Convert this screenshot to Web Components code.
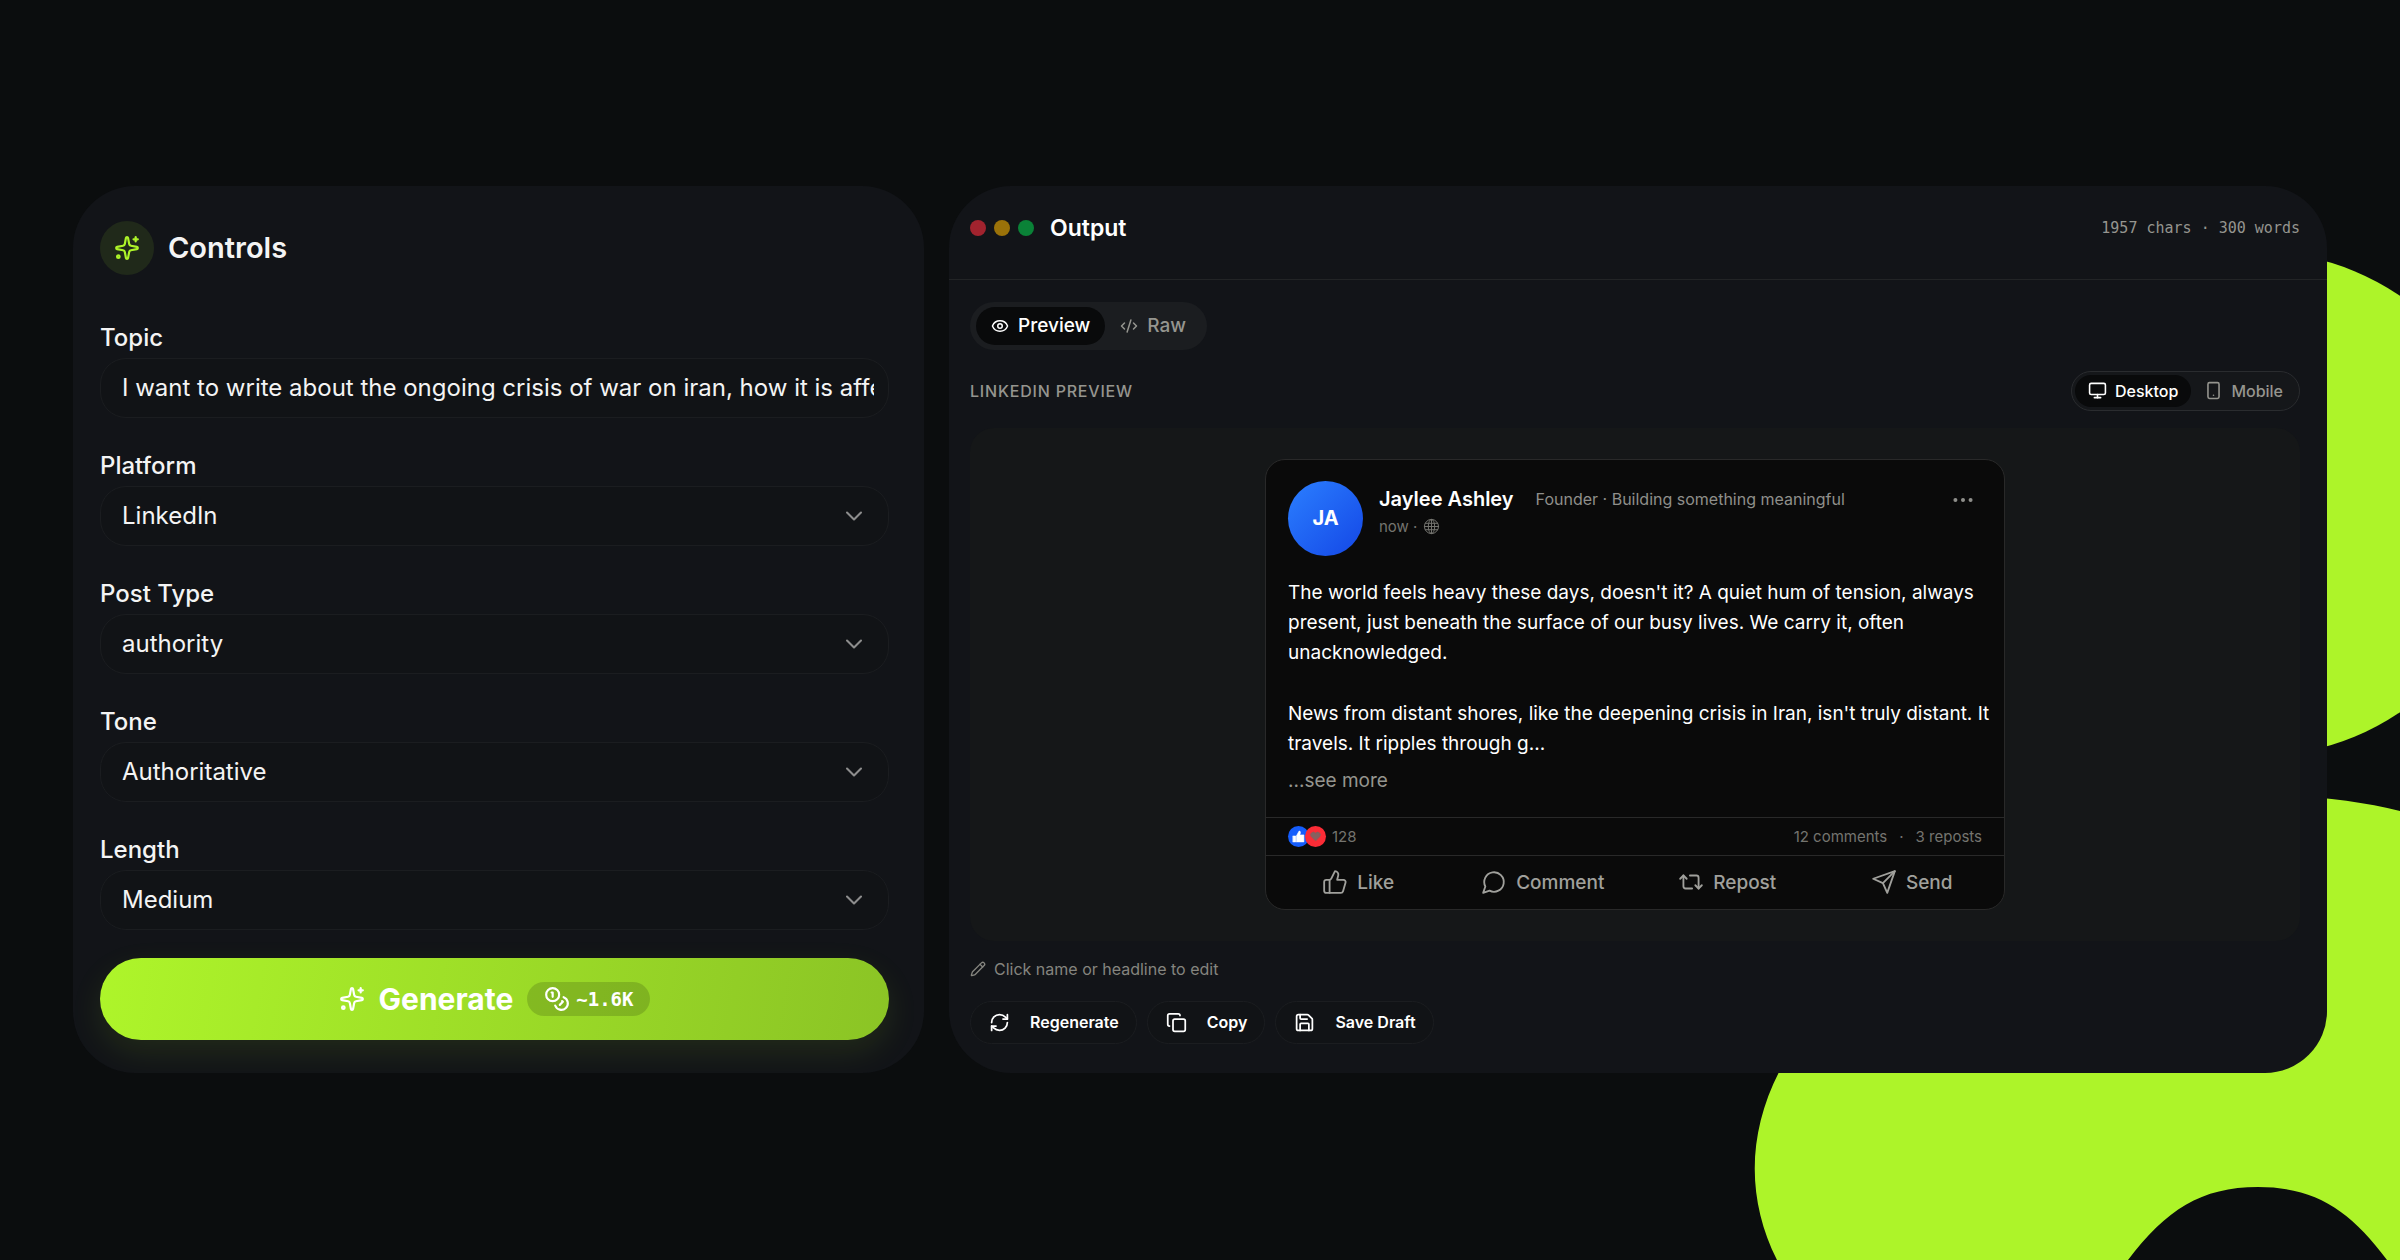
<!DOCTYPE html>
<html lang="en">
<head>
<meta charset="utf-8">
<title>Post generator</title>
<style>
  :root {
    --page: #0b0d0e;
    --panel: #121418;
    --field: #111316;
    --line: #1b1d20;
    --lime: #adf429;
    --text: #f4f4f4;
    --muted: #95958f;
    --dim: #74746f;
  }
  body {
    margin: 0;
    background: var(--page);
    color: var(--text);
    font-family: Inter, "Liberation Sans", sans-serif;
  }
</style>
</head>
<body>
<app-stage>
  <controls-panel></controls-panel>
  <output-panel>
    <linkedin-post author="Jaylee Ashley" initials="JA" headline="Founder · Building something meaningful">
      <p>The world feels heavy these days, doesn't it? A quiet hum of tension, always present, just beneath the surface of our busy lives. We carry it, often unacknowledged.</p>
      <p>News from distant shores, like the deepening crisis in Iran, isn't truly distant. It travels. It ripples through g...</p>
    </linkedin-post>
  </output-panel>
</app-stage>

<script>
const ICONS = {
  sparkles: '<path d="M11.017 2.814a1 1 0 0 1 1.966 0l1.051 5.558a2 2 0 0 0 1.594 1.594l5.558 1.051a1 1 0 0 1 0 1.966l-5.558 1.051a2 2 0 0 0-1.594 1.594l-1.051 5.558a1 1 0 0 1-1.966 0l-1.051-5.558a2 2 0 0 0-1.594-1.594l-5.558-1.051a1 1 0 0 1 0-1.966l5.558-1.051a2 2 0 0 0 1.594-1.594z"/><path d="M20 2v4"/><path d="M22 4h-4"/><circle cx="4" cy="20" r="1.2"/>',
  chevron: '<path d="m6 9 6 6 6-6"/>',
  coins: '<circle cx="8" cy="8" r="6"/><path d="M18.09 10.37A6 6 0 1 1 10.34 18"/><path d="M7 6h1v4"/><path d="m16.71 13.88.7.71-2.82 2.82"/>',
  eye: '<path d="M2.06 12.35a1 1 0 0 1 0-.7 10.75 10.75 0 0 1 19.88 0 1 1 0 0 1 0 .7 10.75 10.75 0 0 1-19.88 0"/><circle cx="12" cy="12" r="3"/>',
  code: '<path d="m18 16 4-4-4-4"/><path d="m6 8-4 4 4 4"/><path d="m14.5 4-5 16"/>',
  monitor: '<rect x="2" y="3" width="20" height="14" rx="2"/><path d="M8 21h8"/><path d="M12 17v4"/>',
  phone: '<rect x="5" y="2" width="14" height="20" rx="2"/><path d="M12 18h.01"/>',
  globe: '<circle cx="12" cy="12" r="10"/><ellipse cx="12" cy="12" rx="4.5" ry="10"/><path d="M2 12h20"/><path d="M12 2v20"/><path d="M3.5 7.5h17"/><path d="M3.5 16.5h17"/>',
  dots: '<g fill="currentColor"><circle cx="5" cy="12" r="1.2"/><circle cx="12" cy="12" r="1.2"/><circle cx="19" cy="12" r="1.2"/></g>',
  thumb: '<path d="M7 10v12"/><path d="M15 5.88 14 10h5.83a2 2 0 0 1 1.92 2.56l-2.33 8A2 2 0 0 1 17.5 22H4a2 2 0 0 1-2-2v-8a2 2 0 0 1 2-2h2.76a2 2 0 0 0 1.79-1.11L12 2a3.13 3.13 0 0 1 3 3.88Z"/>',
  comment: '<path d="M7.9 20A9 9 0 1 0 4 16.1L2 22Z"/>',
  repost: '<path d="m2 9 3-3 3 3"/><path d="M13 18H7a2 2 0 0 1-2-2V6"/><path d="m22 15-3 3-3-3"/><path d="M11 6h6a2 2 0 0 1 2 2v10"/>',
  send: '<path d="m22 2-7 20-4-9-9-4Z"/><path d="M22 2 11 13"/>',
  pencil: '<path d="M21.17 6.81a1 1 0 0 0-3.99-3.99L3.84 16.17a2 2 0 0 0-.5.83l-1.32 4.35a.5.5 0 0 0 .62.62l4.35-1.32a2 2 0 0 0 .83-.5z"/><path d="m15 5 4 4"/>',
  refresh: '<path d="M3 12a9 9 0 0 1 9-9 9.75 9.75 0 0 1 6.74 2.74L21 8"/><path d="M21 3v5h-5"/><path d="M21 12a9 9 0 0 1-9 9 9.75 9.75 0 0 1-6.74-2.74L3 16"/><path d="M8 16H3v5"/>',
  copy: '<rect x="8" y="8" width="14" height="14" rx="2"/><path d="M4 16a2 2 0 0 1-2-2V4c0-1.1.9-2 2-2h10a2 2 0 0 1 2 2"/>',
  save: '<path d="M15.2 3a2 2 0 0 1 1.4.6l3.8 3.8a2 2 0 0 1 .6 1.4V19a2 2 0 0 1-2 2H5a2 2 0 0 1-2-2V5a2 2 0 0 1 2-2z"/><path d="M17 21v-7a1 1 0 0 0-1-1H8a1 1 0 0 0-1 1v7"/><path d="M7 3v4a1 1 0 0 0 1 1h7"/>',
  thumbSolid: '<path fill="currentColor" d="M2 11h5v11H2zM8 11l5-9c2 0 3 1 2.500 3.500L14.500 9H22v13H8z"/>',
  heart: '<path fill="currentColor" d="M12 20 4 12a4.800 4.800 0 0 1 8-6 4.800 4.800 0 0 1 8 6z"/>'
};

const BASE = `
  :host, *, *::before, *::after { box-sizing: border-box; }
  button, input, select { font: inherit; color: inherit; }
  button { border: 0; background: none; padding: 0; cursor: pointer; }
  h2, p { margin: 0; }
`;

function define(name, render, setup) {
  customElements.define(name, class extends HTMLElement {
    constructor() { super(); this.attachShadow({ mode: 'open' }); }
    connectedCallback() {
      this.shadowRoot.innerHTML = render(this);
      if (setup) setup(this, this.shadowRoot);
    }
  });
}

define('ui-icon', el => `
  <style>
    :host { display: inline-flex; flex: none; width: var(--size, 24px); height: var(--size, 24px); }
    svg { width: 100%; height: 100%; fill: none; stroke: currentColor; stroke-linecap: round; stroke-linejoin: round; }
  </style>
  <svg viewBox="0 0 24 24" stroke-width="${el.getAttribute('weight') || 2}" aria-hidden="true">${ICONS[el.getAttribute('name')]}</svg>`);

define('app-stage', () => `
  <style>
    ${BASE}
    :host { display: grid; align-items: center; position: relative; min-height: 100vh; overflow: hidden; padding: 24px 73px 26px; }
    .backdrop { position: absolute; inset: 0; width: 100%; height: 100%; }
    main { position: relative; display: grid; grid-template-columns: minmax(0, 851fr) minmax(0, 1378fr); gap: 25px; }
  </style>
  <svg class="backdrop" viewBox="0 0 2400 1260" preserveAspectRatio="xMaxYMid slice" aria-hidden="true">
    <g fill="#adf429">
      <circle cx="2258" cy="504" r="252"/>
      <path d="M1777 1260C1747 1200 1747 1135 1779 1072C1830 960 2000 795 2258 795C2310 795 2360 801 2400 811V1260H2387C2350 1210 2315 1187 2258 1187C2201 1187 2166 1210 2128 1260Z"/>
    </g>
  </svg>
  <main><slot></slot></main>`);

define('form-field', el => {
  const label = el.getAttribute('label');
  const value = el.getAttribute('value');
  const control = el.hasAttribute('options')
    ? `<select id="control">${el.getAttribute('options').split('|').map(o => `<option${o === value ? ' selected' : ''}>${o}</option>`).join('')}</select><ui-icon name="chevron" weight="1.8"></ui-icon>`
    : `<input id="control" type="text" value="${value}">`;
  return `
  <style>
    ${BASE}
    :host { display: grid; gap: 4px; font-size: 24px; }
    label { line-height: 32px; font-weight: 500; }
    .box { display: grid; align-items: center; }
    .box > * { grid-area: 1 / 1; }
    input, select {
      width: 100%; height: 60px; padding: 0 14px 0 21px; border: 1px solid var(--line); border-radius: 26px;
      background: var(--field); appearance: none; outline: none; text-overflow: clip;
    }
    ui-icon { --size: 28px; justify-self: end; margin-right: 21px; color: #8d8d8d; pointer-events: none; }
  </style>
  <label for="control">${label}</label>
  <div class="box">${control}</div>`;
});

define('controls-panel', () => `
  <style>
    ${BASE}
    :host { display: flex; flex-direction: column; padding: 35px 35px 32px 27px; border-radius: 62px; background: var(--panel); overflow: hidden; }
    header { display: flex; align-items: center; gap: 14px; margin-bottom: 47px; }
    .badge { display: grid; place-items: center; width: 54px; height: 54px; border-radius: 50%; background: #20291a; color: var(--lime); }
    ui-icon { --size: 26px; }
    h2 { font-size: 29px; line-height: 40px; font-weight: 600; }
    .fields { display: grid; gap: 32px; margin-bottom: 28px; }
    .generate {
      display: flex; align-items: center; justify-content: center; gap: 14px; height: 82px; border-radius: 41px;
      background: linear-gradient(100deg, #aef52a, #8bc425); color: #fff; font-size: 30px; font-weight: 700;
      box-shadow: 0 12px 32px rgba(173, 244, 41, .1);
    }
    .cost {
      display: flex; align-items: center; gap: 6px; height: 34px; padding: 0 17px; border-radius: 17px;
      background: rgba(0, 0, 0, .15); font: bold 19px "DejaVu Sans Mono", monospace;
    }
  </style>
  <header><span class="badge"><ui-icon name="sparkles"></ui-icon></span><h2>Controls</h2></header>
  <div class="fields">
    <form-field label="Topic" value="I want to write about the ongoing crisis of war on iran, how it is affecting people everywhere"></form-field>
    <form-field label="Platform" value="LinkedIn" options="LinkedIn|X|Threads"></form-field>
    <form-field label="Post Type" value="authority" options="authority|story|listicle"></form-field>
    <form-field label="Tone" value="Authoritative" options="Authoritative|Friendly|Casual"></form-field>
    <form-field label="Length" value="Medium" options="Short|Medium|Long"></form-field>
  </div>
  <button class="generate" type="button">
    <ui-icon name="sparkles"></ui-icon><span>Generate</span>
    <span class="cost"><ui-icon name="coins"></ui-icon><span>~1.6K</span></span>
  </button>`);

define('segmented-toggle', el => {
  const items = el.getAttribute('items').split('|').map(i => i.split(':'));
  return `
  <style>
    ${BASE}
    :host { display: inline-flex; border-radius: 24px; padding: 5px 6px; background: #1b1d20; }
    :host([size=small]) { padding: 3px; border: 1px solid #2a2c2f; background: #15171a; }
    button { display: flex; align-items: center; gap: 9px; height: 38px; padding: 0 15px; border-radius: 19px; color: var(--muted); font-size: 19px; font-weight: 500; }
    button[aria-pressed=true] { background: #090a0b; color: #fff; }
    ui-icon { --size: 18px; }
    :host([size=small]) button { gap: 8px; height: 32px; padding: 0 13px; font-size: 16px; }
    :host([size=small]) ui-icon { --size: 19px; }
  </style>
  ${items.map(([icon, text], i) => `<button type="button" aria-pressed="${i === 0}"><ui-icon name="${icon}"></ui-icon><span>${text}</span></button>`).join('')}`;
}, (el, root) => {
  root.querySelectorAll('button').forEach((b, _, all) => b.addEventListener('click', () =>
    all.forEach(o => o.setAttribute('aria-pressed', o === b))));
});

define('pill-button', el => `
  <style>
    ${BASE}
    :host { display: inline-flex; }
    button { display: flex; align-items: center; gap: 20px; height: 43px; padding: 0 17px 0 18px; border: 1px solid var(--line); border-radius: 22px; background: var(--field); color: #fff; font-size: 16px; font-weight: 600; }
    ui-icon { --size: 21px; }
  </style>
  <button type="button"><ui-icon name="${el.getAttribute('icon')}"></ui-icon><slot></slot></button>`);

define('output-panel', () => `
  <style>
    ${BASE}
    :host { display: flex; flex-direction: column; border-radius: 62px; background: var(--panel); overflow: hidden; }
    header { display: flex; align-items: center; padding: 22px 27px 31px 21px; border-bottom: 1px solid #222426; }
    .lights { display: flex; gap: 8px; margin-right: 16px; }
    .lights i { width: 16px; height: 16px; border-radius: 50%; background: #a1232e; }
    .lights i:nth-child(2) { background: #9a7209; }
    .lights i:nth-child(3) { background: #0a8237; }
    h2 { flex: 1; font-size: 23px; line-height: 40px; font-weight: 600; color: #fff; }
    .count { font: 15px "DejaVu Sans Mono", monospace; color: var(--muted); }
    .body { display: flex; flex-direction: column; padding: 22px 27px 29px 21px; }
    .tabs { display: flex; margin-bottom: 21px; }
    .bar { display: flex; align-items: center; justify-content: space-between; margin-bottom: 17px; }
    .bar p { font-size: 16px; font-weight: 500; letter-spacing: .05em; text-transform: uppercase; color: var(--muted); }
    .canvas { display: flex; justify-content: center; padding: 31px; border-radius: 24px; background: #151718; }
    .hint { display: flex; align-items: center; gap: 8px; margin: 16px 0 20px; font-size: 16px; line-height: 24px; color: #85857f; }
    .hint ui-icon { --size: 16px; }
    .actions { display: flex; gap: 10px; }
  </style>
  <header>
    <span class="lights"><i></i><i></i><i></i></span>
    <h2>Output</h2>
    <span class="count">1957 chars · 300 words</span>
  </header>
  <div class="body">
    <div class="tabs"><segmented-toggle items="eye:Preview|code:Raw"></segmented-toggle></div>
    <div class="bar"><p>LinkedIn Preview</p><segmented-toggle size="small" items="monitor:Desktop|phone:Mobile"></segmented-toggle></div>
    <div class="canvas"><slot></slot></div>
    <p class="hint"><ui-icon name="pencil"></ui-icon><span>Click name or headline to edit</span></p>
    <div class="actions">
      <pill-button icon="refresh">Regenerate</pill-button>
      <pill-button icon="copy">Copy</pill-button>
      <pill-button icon="save">Save Draft</pill-button>
    </div>
  </div>`);

define('linkedin-post', el => `
  <style>
    ${BASE}
    :host { display: block; width: 100%; max-width: 740px; border: 1px solid #292929; border-radius: 20px; background: #0a0a0a; overflow: hidden; }
    header { display: flex; gap: 16px; padding: 21px 21px 0 22px; }
    .avatar { display: grid; place-items: center; flex: none; width: 75px; height: 75px; border-radius: 50%; background: linear-gradient(135deg, #2b7fff, #1447e6); color: #fff; font-size: 20px; font-weight: 700; }
    .who { flex: 1; display: grid; align-content: start; gap: 2px; padding-top: 4px; }
    .row { display: flex; align-items: center; gap: 22px; line-height: 28px; font-size: 16px; color: #8f8f8b; }
    .name { font-size: 20px; font-weight: 600; color: #fff; }
    .when { display: flex; align-items: center; gap: 6px; font-size: 15px; line-height: 24px; color: var(--dim); }
    .when ui-icon { --size: 17px; }
    .menu { align-self: flex-start; padding: 6px 7px; color: #8f8f8b; --size: 26px; line-height: 0; }
    .text { display: grid; gap: 31px; padding: 22px 14px 0 22px; font-size: 19px; line-height: 30px; color: #fff; }
    ::slotted(p) { margin: 0; }
    .more { display: block; margin: 9px 22px 24px; font-size: 19px; line-height: 25px; color: var(--muted); }
    .stats, .group, .actions { display: flex; align-items: center; }
    .stats { justify-content: space-between; height: 39px; padding: 0 22px; border: solid #292929; border-width: 1px 0; font-size: 15px; color: var(--dim); }
    .group.wide { gap: 12px; }
    .react { display: grid; place-items: center; width: 21px; height: 21px; border-radius: 50%; background: #155dfc; color: #fff; --size: 13px; }
    .react.love { margin: 0 6px 0 -4px; background: #fb2c36; color: #85605f; }
    .actions button { flex: 1; display: flex; align-items: center; justify-content: center; gap: 9px; height: 53px; font-size: 19px; font-weight: 500; color: #a0a09c; --size: 26px; }
  </style>
  <header>
    <span class="avatar">${el.getAttribute('initials')}</span>
    <div class="who">
      <div class="row"><span class="name">${el.getAttribute('author')}</span><span>${el.getAttribute('headline')}</span></div>
      <div class="when"><span>now ·</span><ui-icon name="globe" weight="1.4"></ui-icon></div>
    </div>
    <button class="menu" type="button" aria-label="More"><ui-icon name="dots" weight="1.3"></ui-icon></button>
  </header>
  <div class="text"><slot></slot></div>
  <button class="more" type="button">...see more</button>
  <div class="stats">
    <span class="group">
      <span class="react"><ui-icon name="thumbSolid" weight="1"></ui-icon></span>
      <span class="react love"><ui-icon name="heart" weight="1"></ui-icon></span>
      <span>128</span>
    </span>
    <span class="group wide"><span>12 comments</span><span>·</span><span>3 reposts</span></span>
  </div>
  <div class="actions">
    <button type="button"><ui-icon name="thumb" weight="1.7"></ui-icon><span>Like</span></button>
    <button type="button"><ui-icon name="comment" weight="1.7"></ui-icon><span>Comment</span></button>
    <button type="button"><ui-icon name="repost" weight="1.7"></ui-icon><span>Repost</span></button>
    <button type="button"><ui-icon name="send" weight="1.7"></ui-icon><span>Send</span></button>
  </div>`);
</script>
</body>
</html>
